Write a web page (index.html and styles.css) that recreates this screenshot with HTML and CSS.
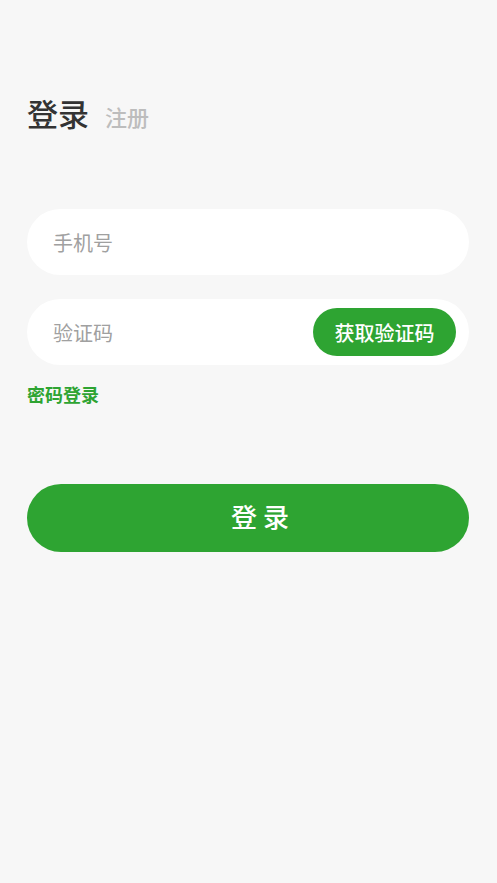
FILE: index.html
```html
<!DOCTYPE html>
<html lang="zh-CN">
<head>
<meta charset="utf-8">
<title>登录</title>
<link rel="stylesheet" href="styles.css">
</head>
<body>
<div class="page">
  <div class="tabs">
    <span class="tab active">登录</span>
    <span class="tab">注册</span>
  </div>
  <div class="form">
    <div class="field">
      <span class="placeholder">手机号</span>
    </div>
    <div class="field code">
      <span class="placeholder">验证码</span>
      <button class="get-code">获取验证码</button>
    </div>
    <a class="switch">密码登录</a>
    <button class="submit">登录</button>
  </div>
</div>
</body>
</html>
```
FILE: styles.css
```css
* { box-sizing: border-box; }
html, body {
  margin: 0;
  padding: 0;
  background: #f7f7f7;
  font-family: "Noto Sans CJK SC", "Noto Sans", sans-serif;
}
.page {
  padding: 90px 28px 0 27px;
}
.tabs {
  display: flex;
  align-items: baseline;
  gap: 16px;
  height: 40px;
}
.tab {
  font-size: 22px;
  color: #bdbdbd;
  font-weight: 500;
}
.tab.active {
  font-size: 31px;
  color: #333333;
  font-weight: 500;
}
.form {
  margin-top: 79px;
  display: flex;
  flex-direction: column;
}
.field {
  height: 66px;
  background: #ffffff;
  border-radius: 33px;
  display: flex;
  align-items: center;
  justify-content: space-between;
  padding: 0 13px 0 26px;
}
.field + .field {
  margin-top: 24px;
}
.placeholder {
  font-size: 20px;
  color: #a0a0a0;
}
.get-code {
  height: 48px;
  width: 143px;
  border: none;
  border-radius: 24px;
  background: #2ea432;
  color: #fff;
  font-family: inherit;
  font-size: 20px;
  font-weight: 500;
  padding: 0;
}
.switch {
  margin-top: 16px;
  font-size: 18px;
  font-weight: 700;
  color: #2ea432;
  line-height: 26px;
}
.submit {
  margin-top: 77px;
  height: 68px;
  border: none;
  border-radius: 34px;
  background: #2ea432;
  color: #fff;
  font-family: inherit;
  font-size: 26px;
  font-weight: 500;
  letter-spacing: 6px;
  padding: 0 0 6px 30px;
}
```
